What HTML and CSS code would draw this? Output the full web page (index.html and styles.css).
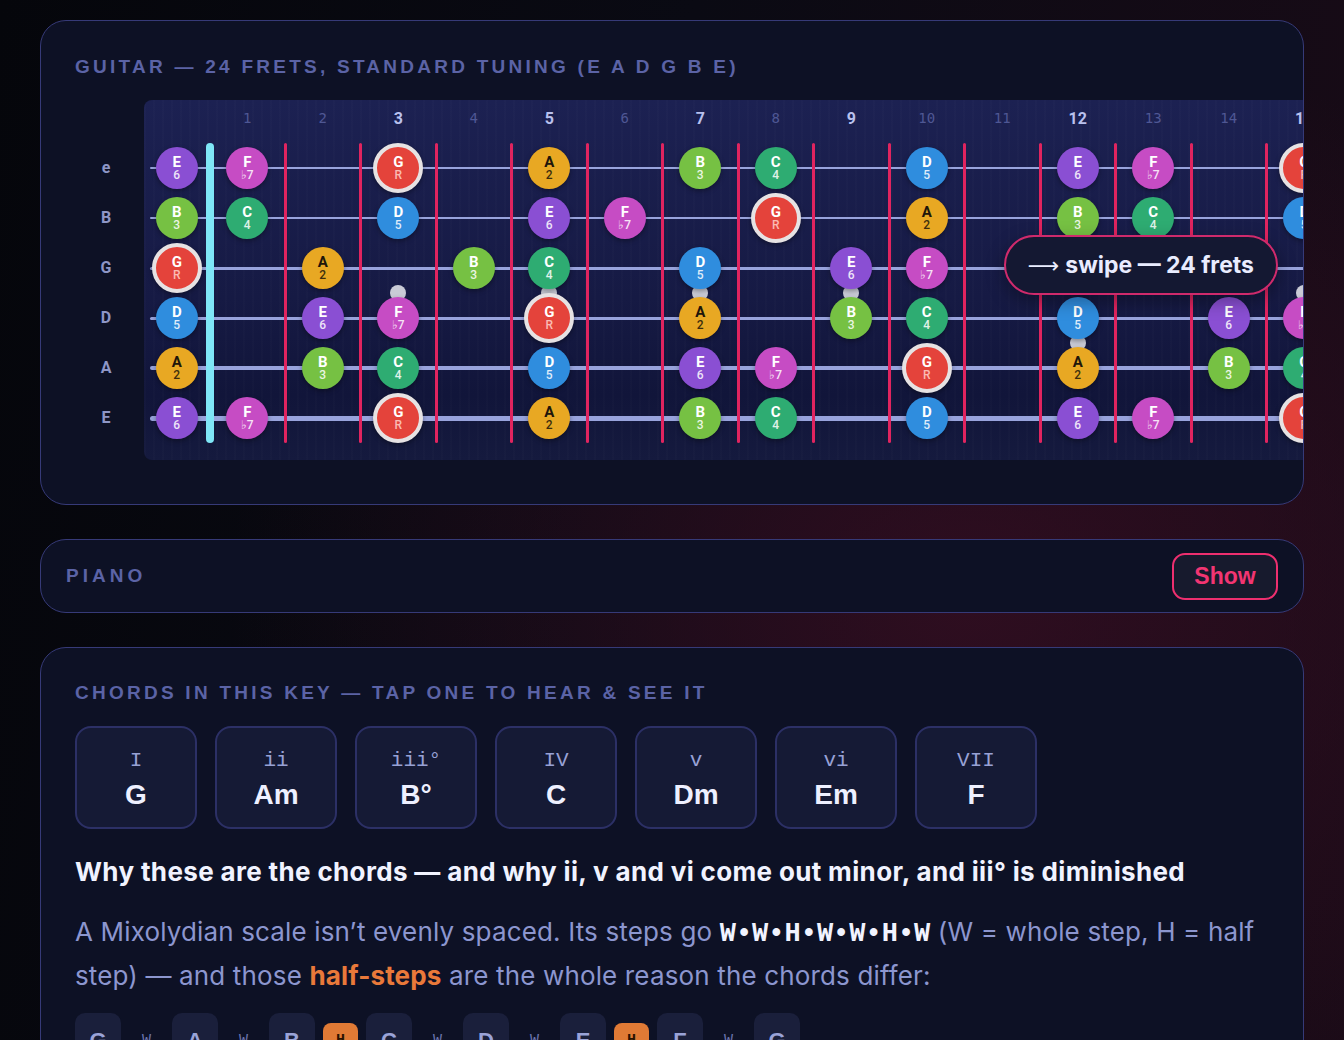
FILE: index.html
```html
<!DOCTYPE html>
<html lang="en">
<head>
  <meta charset="UTF-8">
  <meta name="viewport" content="width=device-width, initial-scale=1.0">
  <title>G Mixolydian — Guitar & Chords</title>
  <link rel="stylesheet" href="styles.css">
</head>
<body>
  <main class="page">
    <section class="card guitar">
      <h2 class="card-title">Guitar — 24 frets, standard tuning (E A D G B E)</h2>
      <div class="neck">
        <div class="string-names" id="stringNames"></div>
        <div class="board-scroll">
          <div class="board" id="board"></div>
        </div>
        <div class="swipe-hint"><span class="arrow">⟶</span> swipe — 24 frets</div>
      </div>
    </section>

    <section class="card piano">
      <h2 class="card-title">Piano</h2>
      <button class="show-btn" type="button">Show</button>
    </section>

    <section class="card chords">
      <h2 class="card-title">Chords in this key — tap one to hear &amp; see it</h2>
      <div class="chord-row">
        <button class="chord" type="button"><span class="numeral">I</span><span class="chord-name">G</span></button>
        <button class="chord" type="button"><span class="numeral">ii</span><span class="chord-name">Am</span></button>
        <button class="chord" type="button"><span class="numeral">iii°</span><span class="chord-name">B°</span></button>
        <button class="chord" type="button"><span class="numeral">IV</span><span class="chord-name">C</span></button>
        <button class="chord" type="button"><span class="numeral">v</span><span class="chord-name">Dm</span></button>
        <button class="chord" type="button"><span class="numeral">vi</span><span class="chord-name">Em</span></button>
        <button class="chord" type="button"><span class="numeral">VII</span><span class="chord-name">F</span></button>
      </div>

      <h3 class="why">Why these are the chords — and why ii, v and vi come out minor, and iii° is diminished</h3>
      <p class="explain">A Mixolydian scale isn’t evenly spaced. Its steps go <b class="steps">W•W•H•W•W•H•W</b> (W = whole step, H = half step) — and those <b class="half">half-steps</b> are the whole reason the chords differ:</p>

      <div class="step-row">
        <span class="step-note">G</span><span class="step">W</span>
        <span class="step-note">A</span><span class="step">W</span>
        <span class="step-note">B</span><span class="step"><em class="h">H</em></span>
        <span class="step-note">C</span><span class="step">W</span>
        <span class="step-note">D</span><span class="step">W</span>
        <span class="step-note">E</span><span class="step"><em class="h">H</em></span>
        <span class="step-note">F</span><span class="step">W</span>
        <span class="step-note">G</span>
      </div>
    </section>
  </main>

  <script>
    // Strings from high e down to low E (open note as semitone, C = 0)
    const strings = [
      { name: 'e', open: 4, gauge: 2 },
      { name: 'B', open: 11, gauge: 2.5 },
      { name: 'G', open: 7, gauge: 3 },
      { name: 'D', open: 2, gauge: 3 },
      { name: 'A', open: 9, gauge: 3.5 },
      { name: 'E', open: 4, gauge: 5 }
    ];
    const noteNames = ['C', 'C♯', 'D', 'D♯', 'E', 'F', 'F♯', 'G', 'G♯', 'A', 'A♯', 'B'];

    // G Mixolydian: semitone -> degree label
    const scale = { 7: 'R', 9: '2', 11: '3', 0: '4', 2: '5', 4: '6', 5: '♭7' };
    const degreeClass = { 'R': 'deg-r', '2': 'deg-2', '3': 'deg-3', '4': 'deg-4', '5': 'deg-5', '6': 'deg-6', '♭7': 'deg-7' };

    const FRETS = 24;
    const markers = [3, 5, 7, 9, 15, 17, 19, 21];
    const doubles = [12, 24];

    const board = document.getElementById('board');
    const names = document.getElementById('stringNames');
    let html = '';

    // Fret numbers
    for (let f = 1; f <= FRETS; f++) {
      const strong = markers.includes(f) || doubles.includes(f);
      html += `<div class="fret-num${strong ? ' strong' : ''}" style="grid-column:${f + 1}">${f}</div>`;
    }

    // Strings
    strings.forEach((s, i) => {
      html += `<div class="string" style="grid-row:${i + 2};height:${s.gauge}px"></div>`;
      names.innerHTML += `<span>${s.name}</span>`;
    });

    // Nut and fret wires
    html += '<div class="nut"></div>';
    for (let f = 1; f <= FRETS; f++) {
      html += `<div class="wire" style="grid-column:${f + 1}"></div>`;
    }

    // Inlay dots
    markers.forEach(f => {
      html += `<div class="inlay" style="grid-column:${f + 1};grid-row:4 / 6"></div>`;
    });
    doubles.forEach(f => {
      html += `<div class="inlay" style="grid-column:${f + 1};grid-row:3 / 5"></div>`;
      html += `<div class="inlay" style="grid-column:${f + 1};grid-row:5 / 7"></div>`;
    });

    // Scale notes
    strings.forEach((s, i) => {
      for (let f = 0; f <= FRETS; f++) {
        const pc = (s.open + f) % 12;
        const deg = scale[pc];
        if (!deg) continue;
        html += `<div class="note ${degreeClass[deg]}" style="grid-column:${f + 1};grid-row:${i + 2}">` +
          `<b>${noteNames[pc]}</b><small>${deg}</small></div>`;
      }
    });

    board.innerHTML = html;
  </script>
</body>
</html>
```

FILE: styles.css
```css
* {
  box-sizing: border-box;
}
body {
  margin: 0;
  min-height: 100vh;
  font-family: Inter, Roboto, "Liberation Sans", sans-serif;
  color: #eef0ff;
  background:
    radial-gradient(ellipse 55% 50% at 72% 52%, rgba(52, 14, 34, 0.85) 0%, rgba(52, 14, 34, 0) 100%),
    linear-gradient(100deg, #05060b 0%, #0a0a13 45%, #1a0b17 100%);
}
.page {
  padding: 20px 40px;
  display: flex;
  flex-direction: column;
  gap: 34px;
}
.card {
  position: relative;
  background: #0d1125;
  border: 1.5px solid #363a78;
  border-radius: 26px;
  padding: 35px 34px 44px;
  overflow: hidden;
}
.card-title {
  margin: 0;
  font: 700 19px/22px "Liberation Sans", Arial, sans-serif;
  letter-spacing: 3.25px;
  text-transform: uppercase;
  color: #5b63a6;
}

/* guitar neck */
.neck {
  position: relative;
  display: flex;
  gap: 7px;
  margin: 22px -34px 0 0;
}
.string-names {
  width: 62px;
  flex: none;
  padding-top: 43px;
  display: flex;
  flex-direction: column;
}
.string-names span {
  height: 50px;
  text-align: center;
  font: 700 16px/50px Roboto, sans-serif;
  color: #8e96c6;
}
.board-scroll {
  flex: 1;
  overflow-x: auto;
  scrollbar-width: none;
  border-radius: 8px 0 0 8px;
  background:
    repeating-linear-gradient(90deg, rgba(255, 255, 255, 0.012) 0 2px, rgba(0, 0, 0, 0) 2px 9px),
    linear-gradient(180deg, #1c2152 0%, #161a44 55%, #11153a 82%, #151a3e 100%);
}
.board-scroll::-webkit-scrollbar {
  display: none;
}
.board {
  display: grid;
  grid-template-columns: 65.5px repeat(24, 75.5px);
  grid-template-rows: 43px repeat(6, 50px);
  padding-bottom: 17px;
  width: max-content;
}
.fret-num {
  grid-row: 1;
  text-align: center;
  font: 400 14px/37px "DejaVu Sans Mono", monospace;
  color: #4f5794;
}
.fret-num.strong {
  font: 700 16px/37px Roboto, sans-serif;
  color: #b9c1ee;
}
.string {
  grid-column: 1 / -1;
  align-self: center;
  margin-left: 6px;
  border-radius: 3px;
  background: #98a3dc;
  z-index: 1;
}
.nut {
  grid-column: 1;
  grid-row: 2 / 8;
  justify-self: end;
  width: 8px;
  margin-right: -4px;
  border-radius: 4px;
  background: #7fe6f7;
  z-index: 2;
}
.wire {
  grid-row: 2 / 8;
  justify-self: end;
  width: 3px;
  margin-right: -1.5px;
  border-radius: 2px;
  background: #e0245f;
  z-index: 2;
}
.inlay {
  justify-self: center;
  align-self: center;
  width: 16px;
  height: 16px;
  border-radius: 50%;
  background: #c9cbd6;
  z-index: 3;
}
.note {
  justify-self: center;
  align-self: center;
  width: 42px;
  height: 42px;
  border-radius: 50%;
  display: flex;
  flex-direction: column;
  align-items: center;
  justify-content: center;
  color: #fff;
  z-index: 4;
  box-shadow: 0 2px 5px rgba(0, 0, 0, 0.35);
}
.note b {
  font: 700 15px/14px Roboto, sans-serif;
}
.note small {
  font: 500 12px/13px Roboto, sans-serif;
  opacity: 0.85;
}
.deg-r {
  background: #e4433b;
  width: 50px;
  height: 50px;
  border: 4px solid #e6e2e3;
}
.deg-r small {
  color: #ffd0c8;
}
.deg-2 {
  background: #e8a823;
  color: #20160a;
}
.deg-3 {
  background: #76c143;
}
.deg-4 {
  background: #2eac72;
}
.deg-5 {
  background: #2f8dde;
}
.deg-6 {
  background: #8a4fd3;
}
.deg-7 {
  background: #c64cc4;
}
.swipe-hint {
  position: absolute;
  top: 135px;
  right: 25px;
  height: 60px;
  padding: 0 22px;
  display: flex;
  align-items: center;
  gap: 6px;
  border: 2px solid #cf2a6c;
  border-radius: 30px;
  background: #141832;
  font: 700 23px Inter, sans-serif;
  color: #e9ecff;
  z-index: 5;
  box-shadow: 0 6px 18px rgba(0, 0, 0, 0.35);
}
.swipe-hint .arrow {
  font: 400 22px "DejaVu Sans", sans-serif;
}

/* piano */
.piano {
  display: flex;
  align-items: center;
  justify-content: space-between;
  padding: 12.5px 25px;
}
.piano .card-title {
  letter-spacing: 4px;
}
.show-btn {
  width: 106px;
  height: 47px;
  border: 2px solid #ee2f6f;
  border-radius: 13px;
  background: #171a2d;
  font: 700 23px "Liberation Sans", Arial, sans-serif;
  color: #f23572;
  cursor: pointer;
}

/* chords */
.chords {
  padding-top: 34px;
  padding-bottom: 60px;
}
.chord-row {
  display: flex;
  gap: 18px;
  margin-top: 22px;
}
.chord {
  width: 122px;
  height: 103px;
  display: flex;
  flex-direction: column;
  align-items: center;
  justify-content: center;
  gap: 5px;
  padding-top: 4px;
  border: 2px solid #2c3066;
  border-radius: 16px;
  background: #151a35;
  cursor: pointer;
}
.numeral {
  font: 400 21px/26px "Liberation Mono", monospace;
  color: #98a1d5;
}
.chord-name {
  font: 700 28px/32px "Liberation Sans", Arial, sans-serif;
  color: #eef0ff;
}
.why {
  margin: 27px 0 0;
  font: 700 26px/32px Inter, sans-serif;
  letter-spacing: 0.35px;
  color: #f1f3ff;
}
.explain {
  margin: 22px 0 0;
  font: 400 26px/44px Inter, sans-serif;
  letter-spacing: 0.15px;
  color: #8c96cf;
}
.steps {
  font: 700 27px "Liberation Mono", monospace;
  letter-spacing: 0;
  color: #f1f3ff;
}
.half {
  color: #e9793a;
}
.step-row {
  display: flex;
  align-items: flex-start;
  margin-top: 15px;
}
.step-note {
  width: 46px;
  height: 56px;
  border-radius: 10px;
  background: #1a1f3b;
  text-align: center;
  font: 700 22px/56px "Liberation Sans", Arial, sans-serif;
  color: #9aa3d8;
}
.step {
  width: 51px;
  display: flex;
  justify-content: center;
  padding-top: 10px;
  font: 400 15px/36px "Liberation Mono", monospace;
  color: #6b73ad;
}
.step .h {
  width: 35px;
  height: 36px;
  border-radius: 8px;
  background: #e07a35;
  text-align: center;
  font-style: normal;
  font-weight: 700;
  color: #2a1200;
}
```
